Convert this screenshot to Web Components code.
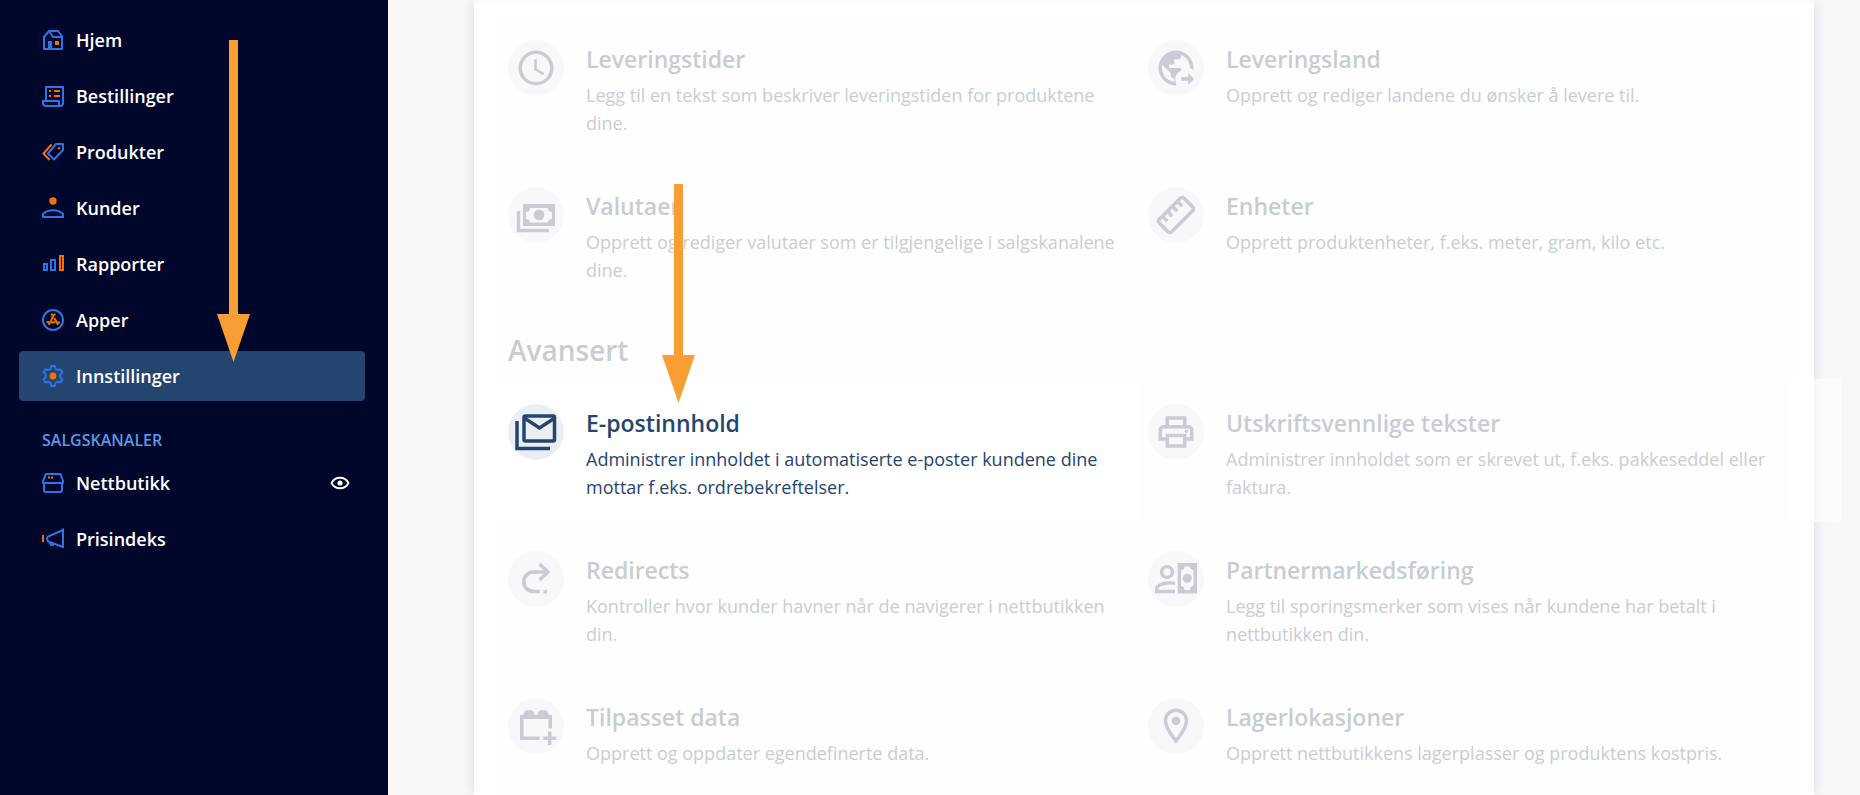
<!DOCTYPE html>
<html lang="no">
<head>
<meta charset="utf-8">
<title>Innstillinger</title>
<style>
    body {
        margin: 0;
        font-family: "Segoe UI", "Open Sans", "Noto Sans", sans-serif;
        color: #24456f;
    }
</style>
</head>
<body>
<app-shell>
    <side-nav slot="nav">
        <nav-item icon="home">Hjem</nav-item>
        <nav-item icon="orders">Bestillinger</nav-item>
        <nav-item icon="tags">Produkter</nav-item>
        <nav-item icon="customer">Kunder</nav-item>
        <nav-item icon="bars">Rapporter</nav-item>
        <nav-item icon="apps">Apper</nav-item>
        <nav-item icon="gear" active>Innstillinger</nav-item>
        <nav-heading>SALGSKANALER</nav-heading>
        <nav-item icon="shop">Nettbutikk<button slot="action" type="button" aria-label="Vis nettbutikk"><svg-icon name="eye"></svg-icon></button></nav-item>
        <nav-item icon="horn">Prisindeks</nav-item>
    </side-nav>

    <settings-panel>
        <settings-group>
            <setting-card icon="clock" heading="Leveringstider">Legg til en tekst som beskriver leveringstiden for produktene dine.</setting-card>
            <setting-card icon="globe" heading="Leveringsland">Opprett og rediger landene du ønsker å levere til.</setting-card>
            <setting-card icon="money" heading="Valutaer">Opprett og rediger valutaer som er tilgjengelige i salgskanalene dine.</setting-card>
            <setting-card icon="ruler" heading="Enheter">Opprett produktenheter, f.eks. meter, gram, kilo etc.</setting-card>
        </settings-group>
        <settings-group heading="Avansert">
            <setting-card icon="mail" heading="E-postinnhold" highlighted>Administrer innholdet i automatiserte e-poster kundene dine mottar f.eks. ordrebekreftelser.</setting-card>
            <setting-card icon="printer" heading="Utskriftsvennlige tekster" washed>Administrer innholdet som er skrevet ut, f.eks. pakkeseddel eller faktura.</setting-card>
            <setting-card icon="redirect" heading="Redirects">Kontroller hvor kunder havner når de navigerer i nettbutikken din.</setting-card>
            <setting-card icon="partner" heading="Partnermarkedsføring">Legg til sporingsmerker som vises når kundene har betalt i nettbutikken din.</setting-card>
            <setting-card icon="custom" heading="Tilpasset data">Opprett og oppdater egendefinerte data.</setting-card>
            <setting-card icon="place" heading="Lagerlokasjoner">Opprett nettbutikkens lagerplasser og produktens kostpris.</setting-card>
        </settings-group>
    </settings-panel>

    <guide-arrow slot="overlay" style="left: 217px; top: 40px; height: 322px"></guide-arrow>
    <guide-arrow slot="overlay" style="left: 662px; top: 184px; height: 219px"></guide-arrow>
</app-shell>

<script>
const BLUE = '#2f74e6';
const ORANGE = '#f57200';

// each entry: [viewBox size, markup]
const ICONS = {
    home: [22, `<g fill="none" stroke="${BLUE}" stroke-width="2" stroke-linejoin="round"><path d="M2 20V8l5-6h9l4 5v13z"/><path d="M7 2l4 6h9"/></g><path fill="${BLUE}" d="M6 12h4v8H6z"/><path fill="${ORANGE}" d="M13 12h4v4h-4z"/>`],
    orders: [22, `<path fill="none" stroke="${BLUE}" stroke-width="2" stroke-linejoin="round" d="M4 15V2h17v16a3 3 0 0 1-3 3H4a3 3 0 0 1-3-3v-2h16v2a3 3 0 0 0 1 3"/><path fill="${ORANGE}" d="M7 5h2v2H7zM12 5h6v2h-6zM7 10h2v2H7zM12 10h6v2h-6z"/>`],
    tags: [22, `<path fill="none" stroke="${ORANGE}" stroke-width="2" d="M9.500 3.500L1.500 12.500l6 6.500"/><path fill="none" stroke="${BLUE}" stroke-width="2" stroke-linejoin="round" d="M14 3h7v6l-9 9.500-6-6z"/><circle cx="17" cy="7.300" r="1.200" fill="${ORANGE}"/>`],
    customer: [22, `<circle cx="11" cy="4" r="3.700" fill="${ORANGE}"/><path fill="none" stroke="${BLUE}" stroke-width="2" d="M1 20v-3c5-5 15-5 20 0v3z"/>`],
    bars: [22, `<g fill="none" stroke-width="2"><path stroke="${BLUE}" d="M2 11h3v6H2zM9 7h4v10H9z"/><path stroke="${ORANGE}" d="M18 3h3v14h-3z"/></g>`],
    apps: [22, `<circle cx="11" cy="11" r="10" fill="none" stroke="${BLUE}" stroke-width="2"/><path fill="none" stroke="${ORANGE}" stroke-width="2" d="M9 5l2 1.500L13.500 5M11.500 6L9 12M4.500 13.200H13M6.500 13l1.200 2.800M12.300 9l3.700 6.800M14 13.600h4"/>`],
    gear: [22, `<path fill="none" stroke="${BLUE}" stroke-width="2" stroke-linejoin="round" d="M9.200 1h3.600l.7 2.900 2.200 1.200 2.800-.9 1.900 3.200-2.100 2v2.900l2.100 2.100-1.900 3.200-2.800-.9-2.200 1.300-.7 2.900H9.200l-.7-2.900-2.200-1.300-2.800.9-1.900-3.200 2.100-2.100V9.400l-2.100-2 1.900-3.200 2.800.9 2.200-1.200z"/><circle cx="11" cy="11" r="3.400" fill="${ORANGE}"/>`],
    shop: [22, `<g fill="none" stroke="${BLUE}" stroke-width="2" stroke-linejoin="round"><path d="M4 2h14.500l2.500 7v2H1V9z"/><path d="M2 11v7q0 2 2 2h14q2 0 2-2v-7"/></g><path fill="${ORANGE}" d="M6 4.500h2v2H6zM9 4.500h2v2H9z"/>`],
    horn: [22, `<path fill="${ORANGE}" d="M0 7h2v7H0z"/><path fill="none" stroke="${BLUE}" stroke-width="2" d="M21 .5V20M21 2L6 8.500 5 10l1 3.500L21 19M8 15l1 2h3"/>`],
    eye: [20, `<path fill="none" stroke="#fff" stroke-width="1.800" d="M1.500 10c3.500-7 13.500-7 17 0-3.500 7-13.500 7-17 0z"/><circle cx="10" cy="10" r="2.600" fill="#fff"/>`],
    clock: [24, `<circle cx="12" cy="12" r="9" fill="none" stroke="currentColor" stroke-width="2"/><path fill="none" stroke="currentColor" stroke-width="1.500" d="M11.700 7v5.700l4.700 2.800"/>`],
    globe: [24, `<path fill="currentColor" d="M22 12c0 .5 0 .9-.1 1.300L20 11.800c-.1-3.300-2.100-6.100-5-7.200V5c0 1.100-.9 2-2 2h-2v2c0 .55-.45 1-1 1H8v2h6c.55 0 1 .45 1 1v.5c-2 .8-3.400 2.700-3.400 4.900 0 1.200.2 2.400.8 3.500L12 22C6.480 22 2 17.520 2 12S6.480 2 12 2s10 4.480 10 10zM11 19.930V18c-1.100 0-2-.9-2-2v-1L4.210 10.210C4.080 10.790 4 11.380 4 12c0 4.080 3.050 7.440 7 7.930z"/><path fill="currentColor" d="M15 17.200h4v-2.400l3.300 3.500L19 21.700v-2.400h-4z"/>`],
    money: [42, `<path fill="currentColor" fill-rule="evenodd" d="M8 10h32v22H8zM15 14q0 4-4 4v7q4 0 4 3.500h18q0-3.500 4-3.500v-7q-4 0-4-4z"/><circle cx="24" cy="21" r="5.400" fill="currentColor"/><path fill="none" stroke="currentColor" stroke-width="3.400" d="M3.500 17v19.500H34"/>`],
    ruler: [24, `<g fill="none" stroke="currentColor" stroke-width="2" transform="rotate(-45 12 12)"><rect x="2" y="7" width="20" height="10" rx="1.500"/><path d="M6 7v4M10 7v4M14 7v4M18 7v4"/></g>`],
    mail: [42, `<g fill="none" stroke="currentColor" stroke-width="3.500"><rect x="9" y="5" width="30.500" height="25" rx="1.500"/><path d="M10 7.500l14.500 9.500L39 7.500M2 10v27.500h33"/></g>`],
    printer: [24, `<path fill="currentColor" d="M19 8h-1V3H6v5H5c-1.660 0-3 1.340-3 3v6h4v4h12v-4h4v-6c0-1.660-1.340-3-3-3zM8 5h8v3H8V5zm8 12v2H8v-4h8v2zm2-2v-2H6v2H4v-4c0-.55.45-1 1-1h14c.55 0 1 .45 1 1v4h-2z"/><circle cx="18" cy="11.500" r="1" fill="currentColor"/>`],
    redirect: [42, `<g fill="none" stroke="currentColor" stroke-width="3.600"><path d="M33 14H18.500a9.700 9.700 0 0 0 0 19.500H25"/><path d="M24.500 6l8.500 8-8.500 8"/></g><path fill="currentColor" d="M28.500 32h3.500v3.500h-3.500z"/>`],
    partner: [42, `<g fill="none" stroke="currentColor" stroke-width="3.400"><circle cx="12" cy="14" r="5.400"/><path d="M20 25.500C11 23.500 1.700 27 1.700 31v2.500H20"/></g><path fill="currentColor" fill-rule="evenodd" d="M22.700 5H42v30.500H22.700zM29.500 8.500q0 3.500-3.500 3.500v16q3.500 0 3.500 4h5.500q0-4 3.500-4V12q-3.500 0-3.500-3.500z"/><circle cx="32.300" cy="20.300" r="4.500" fill="currentColor"/>`],
    custom: [42, `<path fill="currentColor" d="M5 10h3.500q0-5 5.500-5t5.500 5h3q0-5 5.500-5t5.500 5H37v13.500h-3.600V14H8.600v17.500h16V35H5z"/><path fill="none" stroke="currentColor" stroke-width="3.600" d="M34.700 26.500V40M28.300 33.200h13"/>`],
    place: [24, `<path fill="currentColor" d="M12 2C8.130 2 5 5.130 5 9c0 5.250 7 13 7 13s7-7.750 7-13c0-3.870-3.130-7-7-7zM7 9c0-2.760 2.240-5 5-5s5 2.240 5 5c0 2.880-2.880 7.190-5 9.880C9.920 16.210 7 11.850 7 9z"/><circle cx="12" cy="9" r="2.500" fill="currentColor"/>`]
};

class SvgIcon extends HTMLElement {
    constructor() {
        super();
        this.attachShadow({ mode: 'open' });
    }

    connectedCallback() {
        const [size, markup] = ICONS[this.getAttribute('name')];
        this.shadowRoot.innerHTML = `
            <style>
                :host { display: block; flex: none; width: var(--icon-size, 22px); height: var(--icon-size, 22px); }
                svg { display: block; width: 100%; height: 100%; }
            </style>
            <svg viewBox="0 0 ${size} ${size}" aria-hidden="true">${markup}</svg>
        `;
    }
}
customElements.define('svg-icon', SvgIcon);

class AppShell extends HTMLElement {
    constructor() {
        super();
        this.attachShadow({ mode: 'open' });
        this.shadowRoot.innerHTML = `
            <style>
                :host {
                    display: flex;
                    position: relative;
                    height: 100vh;
                    overflow: hidden;
                    background: #f8f8fb;
                }
                main {
                    flex: 1;
                    min-width: 0;
                    padding: 0 46px 0 86px;
                }
            </style>
            <slot name="nav"></slot>
            <main><slot></slot></main>
            <slot name="overlay"></slot>
        `;
    }
}
customElements.define('app-shell', AppShell);

class SideNav extends HTMLElement {
    constructor() {
        super();
        this.attachShadow({ mode: 'open' });
        this.shadowRoot.innerHTML = `
            <style>
                :host {
                    flex: none;
                    box-sizing: border-box;
                    width: 388px;
                    padding: 15px 23px 0 19px;
                    background: #01062b;
                }
                nav {
                    display: flex;
                    flex-direction: column;
                    gap: 6px;
                }
            </style>
            <nav><slot></slot></nav>
        `;
    }
}
customElements.define('side-nav', SideNav);

class NavItem extends HTMLElement {
    constructor() {
        super();
        this.attachShadow({ mode: 'open' });
    }

    connectedCallback() {
        this.shadowRoot.innerHTML = `
            <style>
                :host {
                    display: flex;
                    align-items: center;
                    height: 50px;
                    padding: 0 15px 0 23px;
                    border-radius: 4px;
                    color: #fff;
                }
                :host([active]) { background: #24456f; }
                a {
                    flex: 1;
                    display: flex;
                    align-items: center;
                    gap: 12px;
                    color: inherit;
                    font-size: 18px;
                    font-weight: 600;
                    line-height: 28px;
                    text-decoration: none;
                }
                ::slotted(button) {
                    padding: 0;
                    border: 0;
                    background: none;
                    cursor: pointer;
                    --icon-size: 20px;
                }
            </style>
            <a href="#"><svg-icon name="${this.getAttribute('icon')}"></svg-icon><span><slot></slot></span></a>
            <slot name="action"></slot>
        `;
    }
}
customElements.define('nav-item', NavItem);

class NavHeading extends HTMLElement {
    constructor() {
        super();
        this.attachShadow({ mode: 'open' });
        this.shadowRoot.innerHTML = `
            <style>
                :host { display: block; padding: 22px 23px 0; color: #5c98e6; }
                h2 { margin: 0; font-size: 16px; font-weight: 600; line-height: 23px; }
            </style>
            <h2><slot></slot></h2>
        `;
    }
}
customElements.define('nav-heading', NavHeading);

class SettingsPanel extends HTMLElement {
    constructor() {
        super();
        this.attachShadow({ mode: 'open' });
        this.shadowRoot.innerHTML = `
            <style>
                :host {
                    display: block;
                    padding: 15px 15px 0 20px;
                    background: linear-gradient(#f9f9fa, #fff 6px);
                    box-shadow: 0 0 12px rgba(30, 35, 60, 0.14);
                }
                section {
                    padding: 3px 11px 0 14px;
                    background: #fefefe;
                }
            </style>
            <section><slot></slot></section>
        `;
    }
}
customElements.define('settings-panel', SettingsPanel);

class SettingsGroup extends HTMLElement {
    constructor() {
        super();
        this.attachShadow({ mode: 'open' });
    }

    connectedCallback() {
        const heading = this.getAttribute('heading');
        this.shadowRoot.innerHTML = `
            <style>
                :host { display: block; }
                h2 {
                    margin: 0;
                    padding: 20px 0 14px;
                    color: #c9ccd4;
                    font-size: 28px;
                    font-weight: 600;
                    line-height: 36px;
                }
                .grid {
                    display: grid;
                    grid-template-columns: 1fr 1fr;
                }
            </style>
            ${heading ? `<h2>${heading}</h2>` : ''}
            <div class="grid"><slot></slot></div>
        `;
    }
}
customElements.define('settings-group', SettingsGroup);

class SettingCard extends HTMLElement {
    constructor() {
        super();
        this.attachShadow({ mode: 'open' });
    }

    connectedCallback() {
        this.shadowRoot.innerHTML = `
            <style>
                :host {
                    display: block;
                    position: relative;
                    padding: 22px 0 28px;
                    --title: #c9ccd4;
                    --text: #c9cdd4;
                    --round: #f7f8fa;
                }
                /* white box reaches the edge of the dimmed area */
                :host([highlighted]) {
                    margin: 0 8px 10px -14px;
                    padding: 22px 0 18px 14px;
                    --title: #24456f;
                    --text: #24456f;
                    --round: #ebeef3;
                    background: #fff;
                }
                :host([washed])::after {
                    content: "";
                    position: absolute;
                    top: -3px;
                    left: 100%;
                    width: 53px;
                    height: 143px;
                    background: rgba(255, 255, 255, 0.6);
                }
                a {
                    display: flex;
                    align-items: flex-start;
                    gap: 22px;
                    color: var(--text);
                    text-decoration: none;
                }
                .round {
                    flex: none;
                    display: grid;
                    place-items: center;
                    width: 56px;
                    height: 56px;
                    border-radius: 50%;
                    background: var(--round);
                    color: var(--title);
                    --icon-size: 42px;
                }
                .body { padding: 3px 16px 0 0; }
                h3 {
                    margin: 0 0 6px;
                    color: var(--title);
                    font-size: 23px;
                    font-weight: 600;
                    line-height: 32px;
                }
                p {
                    margin: 0;
                    font-size: 18px;
                    line-height: 28px;
                }
            </style>
            <a href="#">
                <span class="round"><svg-icon name="${this.getAttribute('icon')}"></svg-icon></span>
                <div class="body">
                    <h3>${this.getAttribute('heading')}</h3>
                    <p><slot></slot></p>
                </div>
            </a>
        `;
    }
}
customElements.define('setting-card', SettingCard);

// head keeps its size, the shaft takes what is left of the height
class GuideArrow extends HTMLElement {
    constructor() {
        super();
        this.attachShadow({ mode: 'open' });
        this.shadowRoot.innerHTML = `
            <style>
                :host {
                    position: absolute;
                    display: flex;
                    flex-direction: column;
                    align-items: center;
                    width: 33px;
                    pointer-events: none;
                }
                .shaft { flex: 1; width: 9px; background: #f89e35; }
                .head {
                    width: 100%;
                    height: 48px;
                    background: #f89e35;
                    clip-path: polygon(0 0, 100% 0, 50% 100%);
                }
            </style>
            <div class="shaft"></div>
            <div class="head"></div>
        `;
    }
}
customElements.define('guide-arrow', GuideArrow);
</script>
</body>
</html>
